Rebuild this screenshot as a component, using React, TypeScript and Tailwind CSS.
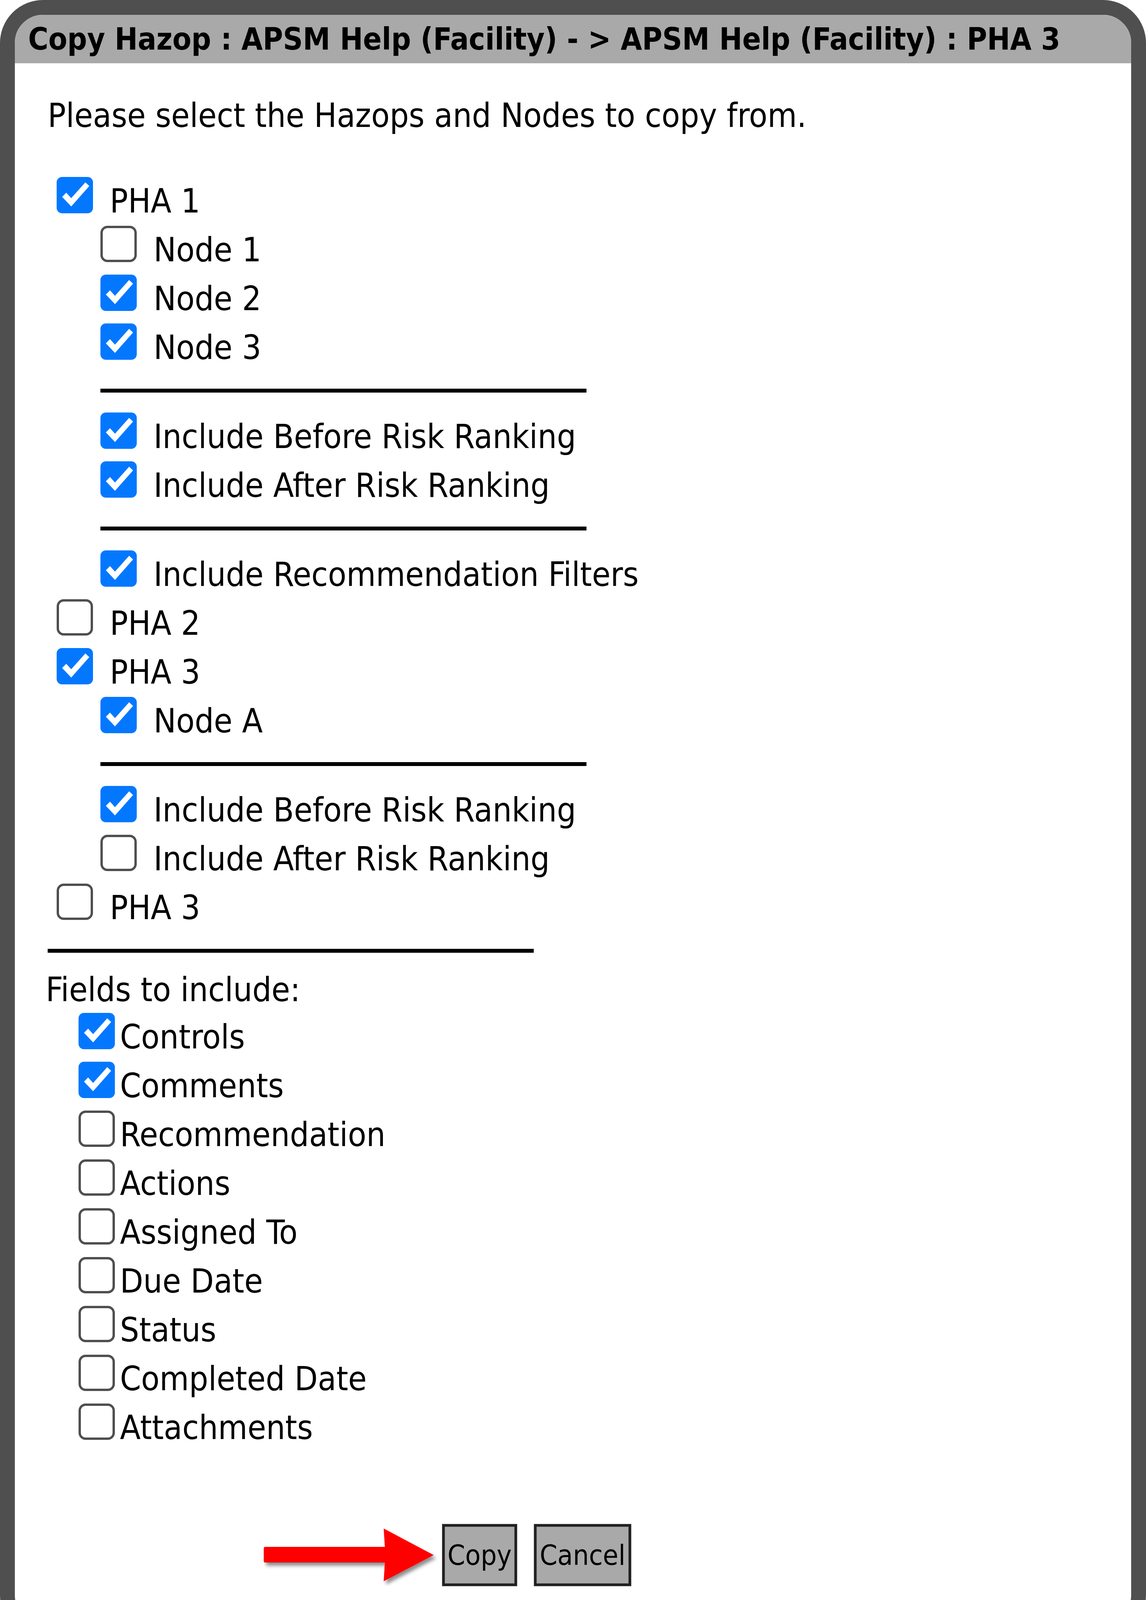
import React from "react";

const FONT = { fontFamily: '"DejaVu Sans Condensed", "DejaVu Sans", sans-serif' };

type Item = { label: string; checked: boolean; level: 0 | 1 };

function Box({ checked }: { checked: boolean }): React.JSX.Element {
  if (checked) {
    return (
      <div className="w-[93px] h-[93px] shrink-0 rounded-[14px] bg-[#0378ff] flex">
        <svg viewBox="0 0 93 93" className="w-full h-full">
          <polygon points="14,51 24.5,40.3 37.3,54.3 73.5,13.7 83.5,23.3 37.3,75.5" fill="#fff" />
        </svg>
      </div>
    );
  }
  return <div className="w-[93px] h-[93px] shrink-0 rounded-[18px] border-[6px] border-[#4f4f4f] bg-white" />;
}

function Row({ label, checked, level }: Item): React.JSX.Element {
  return (
    <div className={`flex items-start h-[125px] ${level === 0 ? "pl-[23px]" : "pl-[135px]"}`}>
      <Box checked={checked} />
      <span className="ml-[43px] leading-[125px] -mt-[1px] whitespace-nowrap">{label}</span>
    </div>
  );
}

function Rule(): React.JSX.Element {
  return <div className="h-[10px] w-[1244px] bg-black mt-[42px] mb-[51px] ml-[135px]" />;
}

const fields: [string, boolean][] = [
  ["Controls", true],
  ["Comments", true],
  ["Recommendation", false],
  ["Actions", false],
  ["Assigned To", false],
  ["Due Date", false],
  ["Status", false],
  ["Completed Date", false],
  ["Attachments", false],
];

function Arrow(): React.JSX.Element {
  return (
    <svg width="457" height="158" viewBox="0 0 457 158" className="shrink-0">
      <defs>
        <filter id="shadow" x="-10%" y="-20%" width="130%" height="150%">
          <feDropShadow dx="6" dy="8" stdDeviation="5" floodColor="#000" floodOpacity="0.45" />
        </filter>
      </defs>
      <path
        d="M4 58 L310 58 L307 11 L435 79 L307 146 L310 98 L4 98 Q0 98 0 94 L0 62 Q0 58 4 58 Z"
        fill="#ff0000"
        filter="url(#shadow)"
      />
    </svg>
  );
}

function Button({ label, width }: { label: string; width: string }): React.JSX.Element {
  return (
    <div
      className={`${width} h-[158px] bg-[#a9a9a9] border-[6px] border-[#231f20] flex items-center justify-center text-[72px] leading-none shadow-[inset_0_0_0_1px_#707070,0_0_0_1px_#808080]`}
    >
      {label}
    </div>
  );
}

export default function App(): React.JSX.Element {
  return (
    <div className="w-[2933px] h-[4194px] bg-white text-black" style={FONT}>
      <div className="w-[2933px] h-[4194px] rounded-[110px] border-[38px] border-[#4f4f4f] overflow-hidden flex flex-col">
        <div className="h-[124px] bg-[#a9a9a9] pl-[34px] text-[78.5px] font-bold leading-[124px] whitespace-nowrap">
          Copy Hazop : APSM Help (Facility) - &gt; APSM Help (Facility) : PHA 3
        </div>

        <div className="flex-1 pl-[84px] pt-[71px] text-[86px]">
          <p className="leading-[125px] whitespace-nowrap">Please select the Hazops and Nodes to copy from.</p>

          <div className="mt-[95px]">
            <Row label="PHA 1" checked level={0} />
            <Row label="Node 1" checked={false} level={1} />
            <Row label="Node 2" checked level={1} />
            <Row label="Node 3" checked level={1} />
            <Rule />
            <Row label="Include Before Risk Ranking" checked level={1} />
            <Row label="Include After Risk Ranking" checked level={1} />
            <Rule />
            <Row label="Include Recommendation Filters" checked level={1} />
            <Row label="PHA 2" checked={false} level={0} />
            <Row label="PHA 3" checked level={0} />
            <Row label="Node A" checked level={1} />
            <Rule />
            <Row label="Include Before Risk Ranking" checked level={1} />
            <Row label="Include After Risk Ranking" checked={false} level={1} />
            <Row label="PHA 3" checked={false} level={0} />
            <div className="h-[10px] w-[1244px] bg-black mt-[42px]" />
          </div>

          {/* Fields to include */}
          <p className="mt-[32px] -ml-[5px] h-[122px] leading-[125px] whitespace-nowrap">Fields to include:</p>
          {fields.map(([label, checked]) => (
            <div key={label} className="flex items-start h-[125px] pl-[79px]">
              <Box checked={checked} />
              <span className="ml-[13px] leading-[125px] -mt-[1px] whitespace-nowrap">{label}</span>
            </div>
          ))}

          <div className="mt-[184px] flex items-center pl-[553px]">
            <Arrow />
            <Button label="Copy" width="w-[191px]" />
            <div className="w-[44px]" />
            <Button label="Cancel" width="w-[248px]" />
          </div>
        </div>
      </div>
    </div>
  );
}
